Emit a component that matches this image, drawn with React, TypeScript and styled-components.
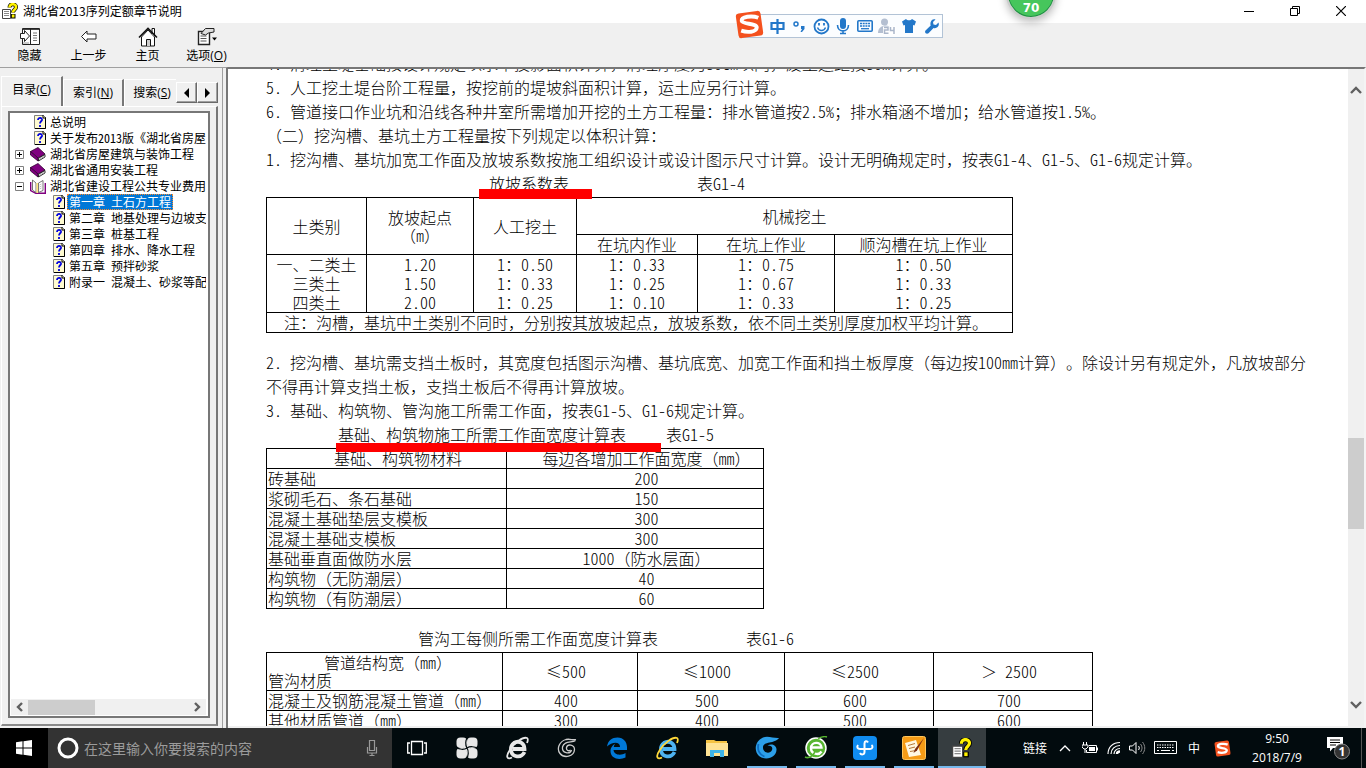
import React from 'react';
import styled, { createGlobalStyle, css } from 'styled-components';

const Global = createGlobalStyle`
  * { box-sizing: border-box; }
  html, body { margin: 0; padding: 0; overflow: hidden; }
  body { font-family: "Open Sans", "Noto Sans CJK SC", sans-serif; font-size: 12px; color: #000; text-spacing-trim: space-all; }
  button { border: 0; margin: 0; padding: 0; background: none; color: inherit; font: inherit; }
  ul { list-style: none; margin: 0; padding: 0; }
`;

/* ---------- half-width latin inside Chinese text ---------- */

const Half = styled.span`
  font-feature-settings: "hwid" 1;
`;

function Mixed({ children }: { children: string }) {
  const parts = children.split(/([\x20-\x7e]+)/);
  return <>{parts.map((p, i) => (i % 2 ? <Half key={i}>{p}</Half> : p))}</>;
}

/* ---------- window frame ---------- */

const Screen = styled.div`
  position: relative;
  display: flex;
  flex-direction: column;
  height: 100vh;
  overflow: hidden;
  background: #f0f0f0;
`;

const TitleBar = styled.header`
  display: flex;
  align-items: center;
  flex: none;
  height: 23px;
  padding: 0 2px 2px;
  background: #fff;
`;

const Title = styled.h1`
  flex: 1;
  margin: 0 0 0 5px;
  font: 400 12px/20px "Noto Sans CJK SC", sans-serif;
`;

const WindowButton = styled.button`
  display: flex;
  align-items: center;
  justify-content: center;
  width: 46px;
  height: 20px;
`;

const Toolbar = styled.nav`
  display: flex;
  flex: none;
  height: 44px;
`;

const ToolButton = styled.button`
  display: flex;
  flex-direction: column;
  align-items: center;
  width: 59px;
  padding-top: 4px;
  line-height: 16px;
  svg { margin-bottom: 1px; }
`;

const Main = styled.div`
  display: flex;
  flex: 1;
  min-height: 0;
`;

/* ---------- navigation pane ---------- */

const NavPane = styled.aside`
  display: flex;
  flex-direction: column;
  flex: none;
  width: 222px;
  padding: 8px 4px 2px 1px;
  border-top: 1px solid #a0a0a0;
`;

const TabRow = styled.div`
  display: flex;
  align-items: flex-end;
  flex: none;
  height: 30px;
`;

const Tab = styled.button<{ $active?: boolean }>`
  width: ${p => (p.$active ? 62 : 61)}px;
  height: ${p => (p.$active ? 30 : 27)}px;
  padding-bottom: ${p => (p.$active ? 3 : 1)}px;
  border-top: 1px solid #fff;
  border-left: 1px solid #fff;
  border-right: 2px solid #777;
  line-height: 18px;
  white-space: nowrap;
  &:nth-child(3) { width: 52px; padding-left: 3px; border-right: 0; }
`;

const TabScroll = styled.button`
  display: flex;
  align-items: center;
  justify-content: center;
  width: 21px;
  height: 21px;
  margin-bottom: 3px;
  border: 1px solid;
  border-color: #fff #696969 #696969 #fff;
  box-shadow: inset -1px -1px #a0a0a0;
`;

const TabPage = styled.div`
  display: flex;
  flex: 1;
  min-height: 0;
  padding: 4px 6px 6px 6px;
  border-top: 1px solid #fff;
  border-left: 1px solid #fff;
  border-right: 2px solid #777;
  border-bottom: 2px solid #8a8a8a;
`;

const TreeBox = styled.div`
  display: flex;
  flex-direction: column;
  flex: 1;
  min-width: 0;
  border: 2px solid;
  border-color: #777;
  padding: 1px 2px 1px 1px;
  background: #fff;
`;

const Tree = styled.ul`
  flex: 1;
  overflow: hidden;
  font: 12px/16px "Noto Sans CJK SC", sans-serif;
`;

const TreeRow = styled.li<{ $child?: boolean }>`
  display: flex;
  align-items: center;
  height: 16px;
  padding-left: ${p => (p.$child ? 23 : 4)}px;
  white-space: nowrap;
`;

const ExpandSlot = styled.span`
  display: flex;
  flex: none;
  width: 15px;
`;

const IconSlot = styled.span`
  display: flex;
  justify-content: flex-end;
  flex: none;
  width: 16px;
`;

const TreeLabel = styled.button<{ $selected?: boolean }>`
  flex: none;
  height: 16px;
  margin-left: 2px;
  padding: 0 1px;
  border: 1px solid transparent;
  line-height: 14px;
  white-space: nowrap;
  ${p => p.$selected && css`
    background: #0078d7;
    border: 1px dotted #ff8728;
    color: #fff;
  `}
`;

const HScroll = styled.div`
  display: flex;
  align-items: center;
  flex: none;
  height: 16px;
  background: #f0f0f0;
  button { display: flex; justify-content: center; width: 17px; }
`;

const HThumb = styled.div`
  width: 67px;
  height: 15px;
  background: #cdcdcd;
`;

const Grow = styled.span`
  flex: 1;
`;

const Splitter = styled.div`
  flex: none;
  width: 6px;
  border-top: 1px solid #a0a0a0;
  border-left: 1px solid #a0a0a0;
  border-right: 2px solid #777;
`;

/* ---------- document ---------- */

const DocPane = styled.main`
  display: flex;
  flex: 1;
  min-width: 0;
  border-top: 2px solid #777;
  border-right: 2px solid #f4f4f4;
  border-bottom: 2px solid #f0f0f0;
  background: #fff;
`;

const DocView = styled.div`
  flex: 1;
  min-width: 0;
  overflow: hidden;
`;

const Article = styled.article`
  margin-top: -18px;
  padding: 0 38px;
  font: 300 16px/24px "Noto Sans CJK SC", sans-serif;
`;

const Para = styled.p`
  margin: 0;
`;

const Caption = styled.div<{ $indent: number; $gap: number }>`
  display: flex;
  gap: ${p => p.$gap}px;
  padding-left: ${p => p.$indent}px;
  margin-bottom: 2px;
`;

const Marked = styled.span`
  position: relative;
`;

const RedLine = styled.i<{ $left: number; $top: number; $width: number; $height: number }>`
  position: absolute;
  z-index: 1;
  left: ${p => p.$left}px;
  top: ${p => p.$top}px;
  width: ${p => p.$width}px;
  height: ${p => p.$height}px;
  background: #f00;
`;

const DataTable = styled.table<{ $padLeft?: number; $padRight?: number }>`
  table-layout: fixed;
  border-collapse: collapse;
  margin-bottom: 17px;
  line-height: 18px;
  th, td {
    padding: 0 ${p => p.$padRight ?? 1}px 1px ${p => p.$padLeft ?? 1}px;
    border: 1px solid #000;
    font-weight: inherit;
    text-align: center;
    white-space: nowrap;
  }
`;

const LeftCell = styled.td`
  && { text-align: left; padding-left: 1px; padding-right: 1px; }
`;

const NoteCell = styled.td`
  && { text-align: left; padding-left: 17px; }
`;

const CornerCell = styled.th`
  && { text-align: left; padding-left: 1px; padding-right: 1px; }
  > span { display: block; padding-left: 56px; }
`;

const GroupRow = styled.tr<{ $h: number }>`
  height: ${p => p.$h}px;
`;

const OpenRow = styled.tr`
  height: 19px;
  && td { border-top: 0; border-bottom: 0; }
`;

const VScroll = styled.div`
  display: flex;
  flex-direction: column;
  flex: none;
  width: 16px;
  padding: 12px 0;
  background: #f0f0f0;
  button { display: flex; justify-content: center; align-items: center; height: 18px; }
`;

const VSpace = styled.div<{ $grow: number }>`
  flex: ${p => p.$grow} 1 0;
`;

const VThumb = styled.div`
  height: 91px;
  background: #cdcdcd;
`;

/* ---------- overlays ---------- */

const ImeBar = styled.div`
  position: absolute;
  top: 14px;
  right: 423px;
  display: flex;
  align-items: center;
  gap: 4px;
  height: 24px;
  width: 202px;
  padding-left: 26px;
  border: 1px solid #b2c3d6;
  background: #fbfdff;
  color: #2277c9;
  button { display: flex; justify-content: center; width: 18px; }
`;

const ImeLogo = styled.span`
  position: absolute;
  left: -7px;
  top: -5px;
  display: flex;
`;

const Ball = styled.div`
  position: absolute;
  top: -31px;
  right: 310px;
  display: flex;
  align-items: flex-end;
  justify-content: center;
  width: 50px;
  height: 50px;
  padding-bottom: 2px;
  border: 2px solid #ccc;
  border-radius: 50%;
  background: #46c65c;
  box-shadow: inset 0 0 0 1px #1f8a45, 0 3px 8px #0004;
  color: #fff;
  font: 700 12px/14px "DejaVu Sans", sans-serif;
`;

/* ---------- taskbar ---------- */

const Taskbar = styled.footer`
  display: flex;
  flex: none;
  height: 40px;
  background: #020b0e;
  color: #fff;
`;

const StartButton = styled.button`
  display: flex;
  align-items: center;
  justify-content: center;
  width: 48px;
  background: #000;
`;

const SearchBox = styled.label`
  display: flex;
  align-items: center;
  width: 344px;
  padding: 0 12px 0 9px;
  background: #333;
  input {
    flex: 1;
    min-width: 0;
    margin: 0 0 0 5px;
    padding: 0;
    border: 0;
    outline: 0;
    background: none;
    color: #fff;
    font: 14px/20px "Noto Sans CJK SC", sans-serif;
  }
  input::placeholder { color: #9b9b9b; opacity: 1; }
`;

const Apps = styled.div`
  display: flex;
  flex: 1;
  gap: 1px;
`;

const AppButton = styled.button<{ $open?: boolean; $active?: boolean }>`
  display: flex;
  align-items: center;
  justify-content: center;
  width: ${p => (p.$active ? 48 : 49)}px;
  background-color: ${p => (p.$active ? '#363d40' : 'transparent')};
  background-image: ${p => (p.$open ? 'linear-gradient(#76b9ed, #76b9ed)' : 'none')};
  background-size: ${p => (p.$active ? 48 : 40)}px 2px;
  background-position: center bottom;
  background-repeat: no-repeat;
  margin-right: ${p => (p.$open ? -1 : 0)}px;
`;

const Tray = styled.div`
  display: flex;
  align-items: center;
  flex: none;
  padding-right: 4px;
`;

const TrayButton = styled.button<{ $w: number }>`
  display: flex;
  align-items: center;
  justify-content: center;
  width: ${p => p.$w}px;
  height: 40px;
  white-space: nowrap;
`;

const Clock = styled.time`
  width: 78px;
  line-height: 19px;
  text-align: center;
`;

const Notify = styled.button`
  display: flex;
  align-items: center;
  justify-content: center;
  width: 46px;
  height: 40px;
  border-right: 1px solid #555;
`;

/* ---------- icons ---------- */

const HelpFile = ({ size = 16 }: { size?: number }) => (
  <svg width={size} height={size} viewBox="0 0 16 16" aria-hidden="true">
    <path d="M.5 6.500h8v9h-8z" fill="#fff" stroke="#444" />
    <path d="M2 8.500h5M2 10.500h5M2 12.500h5" stroke="#888" />
    <path d="M7.500 4.500c0-4.500 6.500-4 6.500-.5 0 3-3 2.500-3 5.500" fill="none" stroke="#000" strokeWidth="4" />
    <path d="M9 11h4.500v4.500H9z" fill="#000" />
    <path d="M7.500 4.500c0-4.500 6.500-4 6.500-.5 0 3-3 2.500-3 5.500" fill="none" stroke="#fff200" strokeWidth="2.600" />
    <path d="M9.800 11.500h2.700v3H9.800z" fill="#fff200" />
  </svg>
);

const PageIcon = () => (
  <svg width="12" height="14" viewBox="0 0 12 14" aria-hidden="true">
    <path d="M.5.5h9l2 2v11H.5z" fill="#fffbd0" stroke="#808080" />
    <path d="M11.500 2.500v11H1" fill="none" stroke="#000" />
    <path d="M9 0v3h3" fill="none" stroke="#000" />
    <path d="M4 5c0-3 4.500-2.500 4 0-.3 1.300-2 1.500-2 3.500M6 10v2" fill="none" stroke="#0000e0" strokeWidth="1.800" />
  </svg>
);

const BookIcon = () => (
  <svg width="16" height="15" viewBox="0 0 16 15" aria-hidden="true">
    <path d="M.5 4.500 8 .5l7 6.500-7 4z" fill="#800080" stroke="#300030" strokeWidth=".8" />
    <path d="M.5 4.500v3.500L8 14v-3z" fill="#800080" stroke="#300030" strokeWidth=".8" />
    <path d="M8.500 11.300 15 7.500v2.500l-6.500 4z" fill="#fff" stroke="#000" strokeWidth=".8" />
    <path d="m9 12.700 5.500-3.400" stroke="#888" strokeWidth=".7" />
  </svg>
);

const OpenBookIcon = () => (
  <svg width="16" height="15" viewBox="0 0 16 15" aria-hidden="true">
    <path d="M.7 3v8.500l5 2.800h9.600V4" fill="#fff" stroke="#800080" strokeWidth="1.400" />
    <path d="M2.500 1 6 4v9.500L2.500 11zM13 1.500 8.500 4v9.500L13 11.500z" fill="#fff" stroke="#555" strokeWidth=".8" />
    <path d="M6.500 4h1.500v10H6.500z" fill="#ffe680" />
    <path d="m9.500 6 2-1M9.500 8l2-1M9.500 10l2-1" stroke="#aaa" strokeWidth=".7" />
  </svg>
);

const Expander = ({ open }: { open?: boolean }) => (
  <svg width="9" height="9" viewBox="0 0 9 9" aria-hidden="true">
    <path d="M.5.5h8v8h-8z" fill="#fff" stroke="#808080" />
    <path d={open ? 'M2 4.500h5' : 'M2 4.500h5M4.500 2v5'} stroke="#000" />
  </svg>
);

const Chevron = ({ d, w = 12, h = 8, color = '#606060' }: { d: string; w?: number; h?: number; color?: string }) => (
  <svg width={w} height={h} viewBox={`0 0 ${w} ${h}`} aria-hidden="true">
    <path d={d} fill="none" stroke={color} strokeWidth="2.400" />
  </svg>
);

const HideIcon = () => (
  <svg width="20" height="20" viewBox="0 0 20 20" aria-hidden="true">
    <path d="M2.500 1.500h17v16h-17z" fill="#fff" stroke="#222" />
    <path d="M3 2.500h16" stroke="#444" />
    <path d="M10.500 2v15" stroke="#222" />
    <path d="M13 6h4M13 8.500h4M13 11h4M13 13.500h4" stroke="#777" />
    <path d="M.5 6.500h4v-3L9.500 9l-5 5.500v-3h-4z" fill="#fff" stroke="#222" />
    <path d="M4 15v2M6 15v2M8 15v2" stroke="#999" />
  </svg>
);

const BackIcon = () => (
  <svg width="20" height="20" viewBox="0 0 20 20" aria-hidden="true">
    <path d="m2.500 9.500 5.500-5.500v3h9v5H8v3z" fill="#fff" stroke="#222" />
  </svg>
);

const HomeIcon = () => (
  <svg width="20" height="20" viewBox="0 0 20 20" aria-hidden="true">
    <path d="M3.500 10v9h13v-9L10 3z" fill="#fff" stroke="#111" />
    <path d="M14 7V1.500h2.500V9" fill="#fff" stroke="#111" />
    <path d="M1 10.500 10 1.500l9 9" fill="none" stroke="#111" strokeWidth="1.600" />
    <path d="M8.500 19v-6.500h4V19" fill="#ccc" stroke="#111" />
  </svg>
);

const OptionsIcon = () => (
  <svg width="20" height="20" viewBox="0 0 20 20" aria-hidden="true">
    <path d="M1.500 4.500h11v13h-11z" fill="#fff" stroke="#222" strokeWidth="1.400" />
    <path d="M3.500 9h6M3.500 11.500h6M3.500 14h6" stroke="#555" />
    <path d="M4 6.500 8.500 1.500H17V5l-5.500 1L8.500 8z" fill="#ddd" stroke="#222" />
    <path d="M15 10.500h5l-2.500 3z" fill="#000" />
  </svg>
);

const SogouLogo = ({ size }: { size: number }) => (
  <svg width={size} height={size} viewBox="0 0 28 28" aria-hidden="true">
    <rect x="2" y="2" width="24" height="24" rx="3" fill="#f4511e" transform="rotate(-8 14 14)" />
    <path d="M22.500 7.500C16 5 6 6.500 6.500 10.500c.8 3.500 15 2 14.500 6.500-.5 4.500-9 5-15 3" fill="none" stroke="#fff" strokeWidth="3.800" />
  </svg>
);

const Smile = () => (
  <svg width="17" height="17" viewBox="0 0 17 17" aria-hidden="true">
    <circle cx="8.500" cy="8.500" r="7" fill="none" stroke="currentColor" strokeWidth="1.800" />
    <path d="M4.500 9.500c1.500 4 6.500 4 8 0" fill="none" stroke="currentColor" strokeWidth="1.400" />
    <path d="M6 5v2.500M11 5v2.500" stroke="currentColor" strokeWidth="1.800" />
  </svg>
);

const Mic = () => (
  <svg width="14" height="17" viewBox="0 0 14 17" aria-hidden="true">
    <rect x="4" y="0" width="6" height="11" rx="3" fill="currentColor" />
    <path d="M1.500 7c0 8 11 8 11 0M7 12v4M4 15.500h6" fill="none" stroke="currentColor" strokeWidth="1.600" />
  </svg>
);

const ImeKeyboard = () => (
  <svg width="16" height="12" viewBox="0 0 16 12" aria-hidden="true">
    <rect x=".8" y=".8" width="14.400" height="10.400" rx="1" fill="none" stroke="currentColor" strokeWidth="1.600" />
    <path d="M3 3.500h10M3 6h10" stroke="currentColor" strokeWidth="1.500" strokeDasharray="2 .7" />
    <path d="M4 8.700h8" stroke="currentColor" strokeWidth="1.300" />
  </svg>
);

const Person24 = () => (
  <svg width="18" height="17" viewBox="0 0 18 17" aria-hidden="true">
    <circle cx="6.500" cy="4" r="3.500" fill="#b4bfd1" />
    <path d="M0 15c0-9 12-9 12-5H5v5z" fill="#b4bfd1" />
    <path d="M5 8.500h13v8H5z" fill="#fff" />
    <path d="M6 9.500h4V12H6.500v3.200h4M12.500 9v3.500h4M16 9v7" fill="none" stroke="#aab6ca" strokeWidth="1.500" />
  </svg>
);

const Shirt = () => (
  <svg width="14" height="14" viewBox="0 0 14 14" aria-hidden="true">
    <path d="M4 0c1 1.800 5 1.800 6 0l4 2.500-1.500 4L11 6v8H3V6l-1.500.5L0 2.500z" fill="currentColor" />
  </svg>
);

const Wrench = () => (
  <svg width="15" height="15" viewBox="0 0 15 15" aria-hidden="true">
    <path d="M11.500.5 9 3l.5 2.500 2.500.5 2.500-2.500c1.500 4-2 6.500-5 5.500l-5 5.300c-2 1.500-4.500-.8-3-2.800l5.200-5C5.500 3 8-.5 11.500.5z" fill="currentColor" />
  </svg>
);

const TaskView = () => (
  <svg width="20" height="16" viewBox="0 0 20 16" fill="none" stroke="#fff" strokeWidth="1.300" aria-hidden="true">
    <path d="M4.500 1.500h11v13h-11zM3 3H.7v10H3M17 3h2.300v10H17" />
  </svg>
);

const Petals = () => (
  <svg width="22" height="22" viewBox="0 0 22 22" aria-hidden="true">
    <rect x=".5" y=".5" width="10.500" height="10.500" rx="4" fill="#e8e8e8" />
    <rect x="11" y=".5" width="10.500" height="10.500" rx="4" fill="#e8e8e8" />
    <rect x=".5" y="11" width="10.500" height="10.500" rx="4" fill="#e8e8e8" />
    <rect x="11" y="11" width="10.500" height="10.500" rx="4" fill="#e8e8e8" />
    <circle cx="11" cy="11" r="3" fill="#e8e8e8" />
    <path d="M11 11C9 8 9.500 3 11.500.5M11 11c3-2 8-1.500 10.500.5M11 11c2 3 1.500 8-.5 10.500M11 11C8 13 3 12.500.5 10.500" fill="none" stroke="#020b0e" strokeWidth="1.200" />
  </svg>
);

const BrowserE = ({ color, ring }: { color: string; ring: string }) => (
  <svg width="24" height="24" viewBox="0 0 24 24" fill="none" aria-hidden="true">
    <path d="M19.500 16c-2 4-5.500 5-9 4C5 18.500 4.500 10 9 7c5-3 10.500 0 10.500 6H8" stroke={color} strokeWidth="3.800" />
    <path d="M7 21.500c-5 2.500-6.500-1-2.500-7C9 7 18 .5 22 2c1.300.8 1 2.500 0 5" stroke={ring} strokeWidth="1.800" />
  </svg>
);

const EdgeIcon = () => (
  <svg width="22" height="22" viewBox="0 0 22 22" aria-hidden="true">
    <path d="M1 9.500C2 3.500 6 .5 11.500.5 17.500.5 21 5 21 10v3H7.500c.3 5 7.500 6 12 3v4.500c-6 3-15 1.500-15-6.500 0-4 3-6.500 5-7.500-1 1-1.500 2-1.700 3.500H14c.3-6-8.500-5-13-.5z" fill="#0078d7" />
  </svg>
);

const Swirl = () => (
  <svg width="20" height="20" viewBox="0 0 20 20" fill="none" stroke="#ccc" aria-hidden="true">
    <path d="M19 1.500c-3 1-6-1-10 0C2 3.500-.5 11 3 15.500c4 5 14 3.500 14.500-4 0-5-7-6-8-2-.5 3 2 4 4 2.500" strokeWidth="1.300" />
    <path d="M18.500 2.500C15 5 7 2.500 5.500 9c-1 6 7.500 8 9 3" strokeWidth="1.300" />
  </svg>
);

const BlueSwirl = () => (
  <svg width="24" height="24" viewBox="0 0 24 24" fill="none" aria-hidden="true">
    <path d="M24 2C19 2.500 13-.5 8 1.500 0 5-1.500 15 4 20c7 5.500 18 1.500 17.500-7-.3-4-5-6-9-3.500 4 0 5.500 2 4.500 4.500C15 18.500 8 17 8 11.500 8 5 20 8 24 2z" fill="#2c9fe8" />
    <path d="M3.500 8c-1.500 6 1 11 6 12.500" stroke="#0c6cc0" strokeWidth="1.800" />
  </svg>
);

const FolderIcon = () => (
  <svg width="22" height="19" viewBox="0 0 22 19" aria-hidden="true">
    <path d="M0 1h8l2 1h11v15H0z" fill="#f5c343" />
    <path d="M0 4h22v13H0z" fill="#ffe394" />
    <path d="M4 18v-7h14v7h-4v-4H8v4z" fill="#3fb4e8" />
  </svg>
);

const GreenE = () => (
  <svg width="24" height="24" viewBox="0 0 24 24" fill="none" aria-hidden="true">
    <circle cx="12" cy="12" r="10" fill="#58b531" stroke="#fff" strokeWidth="1.500" />
    <path d="M17.500 15.500c-2.500 4-10.500 3-10.500-3.500s10-7 10.500-.5H7" stroke="#fff" strokeWidth="2.400" />
    <path d="M1 21c4 2 8-2 10-5M14 3c3-2 6-3 9-2" stroke="#58b531" strokeWidth="1.500" />
  </svg>
);

const BlueTile = () => (
  <svg width="24" height="24" viewBox="0 0 24 24" fill="none" aria-hidden="true">
    <rect width="24" height="24" rx="4" fill="#108cf0" />
    <path d="M15 6.500c-1-2-3.500-1.500-3.500 1V16c0 3-3.500 3-4.500 1M5 9c-1.500 2-.5 4 2 4h10c3 0 3-3 1.500-4" stroke="#fff" strokeWidth="2" />
  </svg>
);

const NoteTile = () => (
  <svg width="24" height="24" viewBox="0 0 24 24" fill="none" aria-hidden="true">
    <rect x=".5" y=".5" width="23" height="23" rx="2" fill="#f59b16" stroke="#ffc55a" />
    <path d="m3 7 11-3 5 15-12 2z" fill="#fff7e2" />
    <path d="m6 9.500 7-2M7 12.500l6-1.500M8 15.500l6-1" stroke="#b5783a" />
    <path d="M22 2 13 13l-1.500 4 3.500-2.500z" fill="#7a2b13" />
  </svg>
);

/* ---------- data ---------- */

type Node = { label: string; icon: 'page' | 'book' | 'open'; child?: boolean; selected?: boolean };

const NODES: Node[] = [
  { label: '总说明', icon: 'page' },
  { label: '关于发布2013版《湖北省房屋', icon: 'page' },
  { label: '湖北省房屋建筑与装饰工程', icon: 'book' },
  { label: '湖北省通用安装工程', icon: 'book' },
  { label: '湖北省建设工程公共专业费用', icon: 'open' },
  { label: '第一章 土石方工程', icon: 'page', child: true, selected: true },
  { label: '第二章 地基处理与边坡支', icon: 'page', child: true },
  { label: '第三章 桩基工程', icon: 'page', child: true },
  { label: '第四章 排水、降水工程', icon: 'page', child: true },
  { label: '第五章 预拌砂浆', icon: 'page', child: true },
  { label: '附录一 混凝土、砂浆等配', icon: 'page', child: true },
];

const SLOPES = [
  ['一、二类土', '1.20', '1：0.50', '1：0.33', '1：0.75', '1：0.50'],
  ['三类土', '1.50', '1：0.33', '1：0.25', '1：0.67', '1：0.33'],
  ['四类土', '2.00', '1：0.25', '1：0.10', '1：0.33', '1：0.25'],
];

const WIDTHS = [
  ['砖基础', '200'],
  ['浆砌毛石、条石基础', '150'],
  ['混凝土基础垫层支模板', '300'],
  ['混凝土基础支模板', '300'],
  ['基础垂直面做防水层', '1000（防水层面）'],
  ['构筑物（无防潮层）', '40'],
  ['构筑物（有防潮层）', '60'],
];

const PIPES = [
  ['混凝土及钢筋混凝土管道（mm）', '400', '500', '600', '700'],
  ['其他材质管道（mm）', '300', '400', '500', '600'],
];

const Cols = ({ widths }: { widths: number[] }) => (
  <colgroup>{widths.map((w, i) => <col key={i} style={{ width: w }} />)}</colgroup>
);

function Document() {
  return (
    <Article>
      <Para><Mixed>4. 清理土堤基础按设计规定以水平投影面积计算，清理厚度为30cm以内，废土运距按30m计算。</Mixed></Para>
      <Para><Mixed>5. 人工挖土堤台阶工程量，按挖前的堤坡斜面积计算，运土应另行计算。</Mixed></Para>
      <Para><Mixed>6. 管道接口作业坑和沿线各种井室所需增加开挖的土方工程量：排水管道按2.5%；排水箱涵不增加；给水管道按1.5%。</Mixed></Para>
      <Para>（二）挖沟槽、基坑土方工程量按下列规定以体积计算：</Para>
      <Para><Mixed>1. 挖沟槽、基坑加宽工作面及放坡系数按施工组织设计或设计图示尺寸计算。设计无明确规定时，按表G1-4、G1-5、G1-6规定计算。</Mixed></Para>
      <Caption $indent={223} $gap={128}>
        <Marked>放坡系数表<RedLine $left={-10} $top={18} $width={113} $height={10} /></Marked>
        <span><Mixed>表G1-4</Mixed></span>
      </Caption>
      <DataTable style={{ width: 747 }}>
        <Cols widths={[100, 107, 103, 121, 137, 178]} />
        <thead>
          <GroupRow $h={37}>
            <th rowSpan={2}>土类别</th>
            <th rowSpan={2}>放坡起点<br /><Mixed>（m）</Mixed></th>
            <th rowSpan={2}>人工挖土</th>
            <th colSpan={3}>机械挖土</th>
          </GroupRow>
          <GroupRow $h={20}>
            <th>在坑内作业</th>
            <th>在坑上作业</th>
            <th>顺沟槽在坑上作业</th>
          </GroupRow>
        </thead>
        <tbody>
          {SLOPES.map(r => (
            <OpenRow key={r[0]}>{r.map((c, i) => <td key={i}><Mixed>{c}</Mixed></td>)}</OpenRow>
          ))}
          <GroupRow $h={20}>
            <NoteCell colSpan={6}>注：沟槽，基坑中土类别不同时，分别按其放坡起点，放坡系数，依不同土类别厚度加权平均计算。</NoteCell>
          </GroupRow>
        </tbody>
      </DataTable>
      <Para><Mixed>2. 挖沟槽、基坑需支挡土板时，其宽度包括图示沟槽、基坑底宽、加宽工作面和挡土板厚度（每边按100mm计算）。除设计另有规定外，凡放坡部分不得再计算支挡土板，支挡土板后不得再计算放坡。</Mixed></Para>
      <Para><Mixed>3. 基础、构筑物、管沟施工所需工作面，按表G1-5、G1-6规定计算。</Mixed></Para>
      <Caption $indent={72} $gap={40}>
        <Marked>基础、构筑物施工所需工作面宽度计算表<RedLine $left={-2} $top={21} $width={325} $height={9} /></Marked>
        <span><Mixed>表G1-5</Mixed></span>
      </Caption>
      <DataTable $padLeft={24} style={{ width: 498 }}>
        <Cols widths={[240, 257]} />
        <thead>
          <tr><th>基础、构筑物材料</th><th><Mixed>每边各增加工作面宽度（mm）</Mixed></th></tr>
        </thead>
        <tbody>
          {WIDTHS.map(r => (
            <tr key={r[0]}><LeftCell>{r[0]}</LeftCell><td><Mixed>{r[1]}</Mixed></td></tr>
          ))}
        </tbody>
      </DataTable>
      <Caption $indent={152} $gap={88}>
        <span>管沟工每侧所需工作面宽度计算表</span>
        <span><Mixed>表G1-6</Mixed></span>
      </Caption>
      <DataTable $padRight={9} style={{ width: 827 }}>
        <Cols widths={[236, 135, 147, 149, 159]} />
        <thead>
          <tr>
            <CornerCell><span><Mixed>管道结构宽（mm）</Mixed></span>管沟材质</CornerCell>
            {['≤500', '≤1000', '≤2500', '＞ 2500'].map(c => <th key={c}><Mixed>{c}</Mixed></th>)}
          </tr>
        </thead>
        <tbody>
          {PIPES.map(r => (
            <tr key={r[0]}>
              <LeftCell><Mixed>{r[0]}</Mixed></LeftCell>
              {r.slice(1).map((c, i) => <td key={i}><Mixed>{c}</Mixed></td>)}
            </tr>
          ))}
        </tbody>
      </DataTable>
    </Article>
  );
}

export default function App() {
  return (
    <Screen>
      <Global />
      <TitleBar>
        <HelpFile />
        <Title>湖北省2013序列定额章节说明</Title>
        <WindowButton aria-label="最小化">
          <svg width="10" height="10"><path d="M0 5.500h10" stroke="#000" /></svg>
        </WindowButton>
        <WindowButton aria-label="还原">
          <svg width="10" height="10" fill="none" stroke="#000"><path d="M.5 2.500h7v7h-7zM2.500 2V.5h7v7H8" /></svg>
        </WindowButton>
        <WindowButton aria-label="关闭">
          <svg width="10" height="10"><path d="m0 0 10 10M10 0 0 10" stroke="#000" strokeWidth="1.200" /></svg>
        </WindowButton>
      </TitleBar>
      <Toolbar>
        <ToolButton><HideIcon />隐藏</ToolButton>
        <ToolButton><BackIcon />上一步</ToolButton>
        <ToolButton><HomeIcon />主页</ToolButton>
        <ToolButton><OptionsIcon /><span>选项(<u>O</u>)</span></ToolButton>
      </Toolbar>
      <Main>
        <NavPane>
          <TabRow role="tablist">
            <Tab role="tab" $active>目录(<u>C</u>)</Tab>
            <Tab role="tab">索引(<u>N</u>)</Tab>
            <Tab role="tab">搜索(<u>S</u>)</Tab>
            <TabScroll aria-label="向左"><svg width="5" height="10"><path d="M5 0v10L0 5z" /></svg></TabScroll>
            <TabScroll aria-label="向右"><svg width="5" height="10"><path d="M0 0v10l5-5z" /></svg></TabScroll>
          </TabRow>
          <TabPage>
            <TreeBox>
              <Tree role="tree">
                {NODES.map(n => (
                  <TreeRow key={n.label} role="treeitem" $child={n.child}>
                    <ExpandSlot>{n.icon !== 'page' && <Expander open={n.icon === 'open'} />}</ExpandSlot>
                    <IconSlot>
                      {n.icon === 'page' ? <PageIcon /> : n.icon === 'book' ? <BookIcon /> : <OpenBookIcon />}
                    </IconSlot>
                    <TreeLabel $selected={n.selected}><Mixed>{n.label}</Mixed></TreeLabel>
                  </TreeRow>
                ))}
              </Tree>
              <HScroll>
                <button aria-label="向左滚动"><Chevron w={7} h={10} d="M6 1 2 5l4 4" /></button>
                <HThumb />
                <Grow />
                <button aria-label="向右滚动"><Chevron w={7} h={10} d="m1 1 4 4-4 4" /></button>
              </HScroll>
            </TreeBox>
          </TabPage>
        </NavPane>
        <Splitter />
        <DocPane>
          <DocView><Document /></DocView>
          <VScroll>
            <button aria-label="向上滚动"><Chevron d="M1 7 6 2l5 5" /></button>
            <VSpace $grow={338} />
            <VThumb />
            <VSpace $grow={167} />
            <button aria-label="向下滚动"><Chevron d="m1 1 5 5 5-5" /></button>
          </VScroll>
        </DocPane>
      </Main>

      <Taskbar>
        <StartButton aria-label="开始">
          <svg width="16" height="16"><path d="M0 2.300 6.500 1.300v6.200H0zM7.500 1.200 16 0v7.500H7.500zM0 8.500h6.500v6.200L0 13.700zM7.500 8.500H16V16l-8.500-1.200z" fill="#fff" /></svg>
        </StartButton>
        <SearchBox>
          <svg width="22" height="22"><circle cx="11" cy="11" r="9" fill="none" stroke="#fff" strokeWidth="3" /></svg>
          <input aria-label="搜索" placeholder="在这里输入你要搜索的内容" />
          <svg width="16" height="18" fill="none" stroke="#999" strokeWidth="1.200"><path d="M5.500 1.500h5v10h-5zM3.500 8v6h9V8M8 14v3M5.500 16.500h5" /></svg>
        </SearchBox>
        <Apps>
          <AppButton aria-label="任务视图"><TaskView /></AppButton>
          <AppButton aria-label="风车"><Petals /></AppButton>
          <AppButton aria-label="浏览器"><BrowserE color="#e8e8e8" ring="#e8e8e8" /></AppButton>
          <AppButton aria-label="漩涡"><Swirl /></AppButton>
          <AppButton aria-label="Edge"><EdgeIcon /></AppButton>
          <AppButton aria-label="Internet Explorer"><BrowserE color="#4db2f0" ring="#ffd83a" /></AppButton>
          <AppButton aria-label="文件资源管理器"><FolderIcon /></AppButton>
          <AppButton aria-label="广联达" $open><BlueSwirl /></AppButton>
          <AppButton aria-label="安全浏览器" $open><GreenE /></AppButton>
          <AppButton aria-label="云助手" $open><BlueTile /></AppButton>
          <AppButton aria-label="便笺" $open><NoteTile /></AppButton>
          <AppButton aria-label="帮助" $open $active><HelpFile size={20} /></AppButton>
        </Apps>
        <Tray>
          <TrayButton $w={34}>链接</TrayButton>
          <TrayButton $w={26} aria-label="显示隐藏的图标">
            <svg width="12" height="8"><path d="m1 7 5-5 5 5" fill="none" stroke="#fff" strokeWidth="1.300" /></svg>
          </TrayButton>
          <TrayButton $w={24} aria-label="电池">
            <svg width="16" height="12" fill="none" stroke="#fff"><path d="M7 3.500h7.500v7h-10V8" /><path d="M15.500 5.500v3" /><path d="M7 5h6v4H7z" fill="#fff" stroke="none" /><path d="M1.500 0v3M4.500 0v3M0 3h6v2L4 7H2L0 5zM3 7v4" /></svg>
          </TrayButton>
          <TrayButton $w={24} aria-label="网络">
            <svg width="14" height="14" fill="none" stroke="#fff" strokeWidth="1.200"><path d="M1 13C1 6 6 1.500 13 1.500M4 13c0-5 4-8.500 9-8.500M7 13c0-3 2.500-5.500 6-5.500" /><path d="M10 13c0-2 1-2.500 3-2.500" strokeWidth="2.500" /></svg>
          </TrayButton>
          <TrayButton $w={22} aria-label="音量">
            <svg width="17" height="14" fill="none" stroke="#fff"><path d="M.5 5v4h3L7 12.500v-11L3.500 5zM9.500 5c1 1.300 1 2.700 0 4" /><path d="M11.500 3c2 2.700 2 5.300 0 8M13.500 1c3 4 3 8 0 12" stroke="#888" /></svg>
          </TrayButton>
          <TrayButton $w={34} aria-label="触摸键盘">
            <svg width="23" height="14" fill="none" stroke="#fff"><path d="M.5.500h22v12H.5z" /><path d="M3 4h17M3 6.500h17" strokeDasharray="1.500 1" /><path d="M3 9.500h2M7 9.500h9M18 9.500h2" /></svg>
          </TrayButton>
          <TrayButton $w={24}>中</TrayButton>
          <TrayButton $w={32} aria-label="搜狗输入法"><SogouLogo size={17} /></TrayButton>
          <Clock>9:50<br />2018/7/9</Clock>
          <Notify aria-label="通知">
            <svg width="26" height="26">
              <path d="M1 2h16v11H7l-3 3.500V13H1z" fill="#fff" />
              <path d="M4 5h10M4 7.500h10M4 10h6" stroke="#000" />
              <circle cx="16" cy="16.500" r="7.500" fill="#333" stroke="#888" />
              <text x="16" y="21" textAnchor="middle" fontSize="12" fontWeight="700" fill="#fff">1</text>
            </svg>
          </Notify>
        </Tray>
      </Taskbar>

      <ImeBar>
        <ImeLogo><SogouLogo size={29} /></ImeLogo>
        <button aria-label="中文">
          <svg width="15" height="15" fill="none" stroke="currentColor" strokeWidth="2.200"><path d="M1.500 4h12v6h-12zM7.500 0v15" /></svg>
        </button>
        <button aria-label="标点">
          <svg width="12" height="12"><circle cx="3" cy="4" r="2" fill="none" stroke="currentColor" strokeWidth="1.500" /><path d="M8 6h3.500v3L9 12H7.500L9 9H8z" fill="currentColor" /></svg>
        </button>
        <button aria-label="表情"><Smile /></button>
        <button aria-label="语音"><Mic /></button>
        <button aria-label="键盘"><ImeKeyboard /></button>
        <button aria-label="用户"><Person24 /></button>
        <button aria-label="皮肤"><Shirt /></button>
        <button aria-label="工具"><Wrench /></button>
      </ImeBar>
      <Ball>70</Ball>
    </Screen>
  );
}
